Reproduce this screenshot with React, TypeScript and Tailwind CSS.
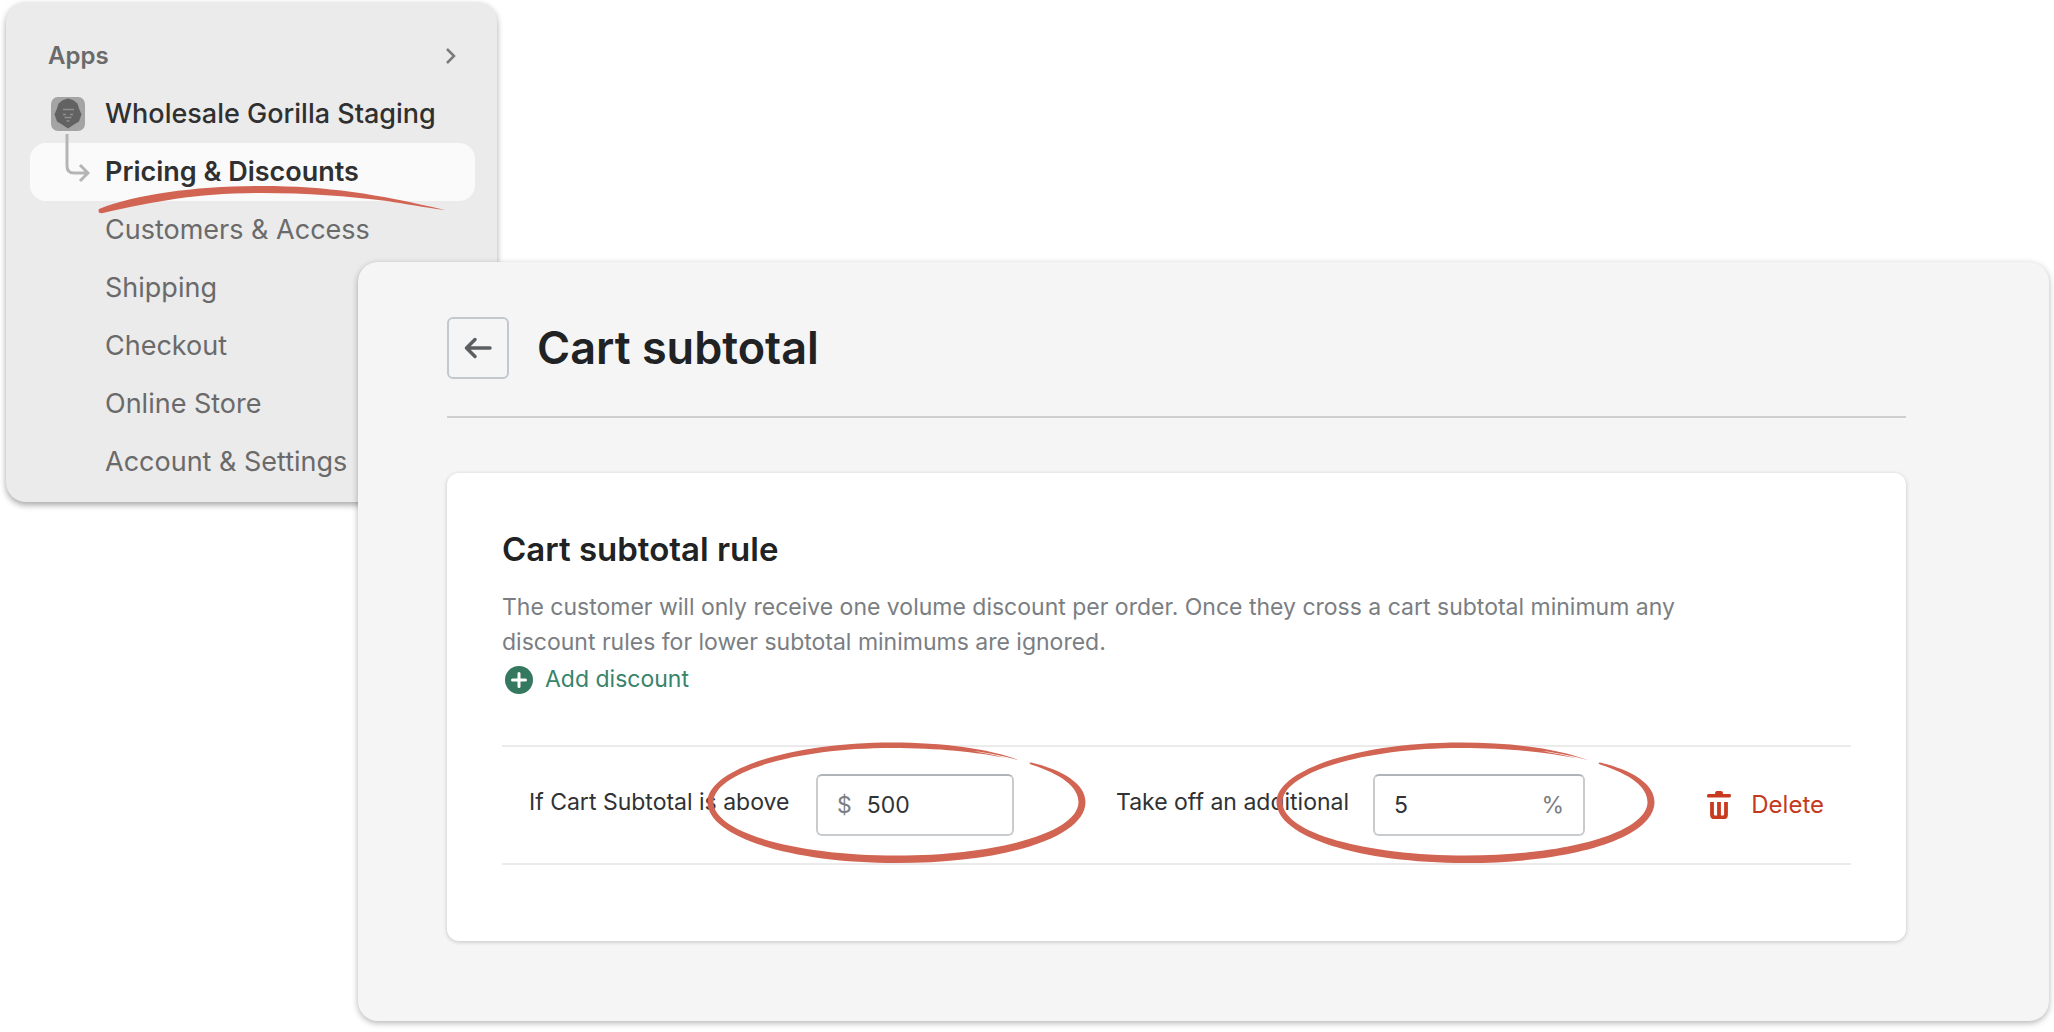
const MENU = ["Customers & Access", "Shipping", "Checkout", "Online Store", "Account & Settings"];

function Ring() {
  return (
    <svg viewBox="0 0 380 122" className="pointer-events-none h-[122px] w-[380px] max-w-none" fill="#d16452" aria-hidden="true">
      <path d="M313 18.500C283 7 238 .5 185 .5C82 .5 .5 28 .5 60C.5 95 84 121 190 121C296 121 378.500 96 378.500 60C378.500 42 356 28 324 20.500Q321 20.500 324 22.500C354 32 371.500 45 371.500 60C371.500 90 292 113.500 190 113.500C90 113.500 6.500 91 6.500 60C6.500 31 86 6 185 6C232 6 268 10 302 16.500C284 12 270 9.500 258 8C278 10 296 13.500 313 18.500Z" />
    </svg>
  );
}

export default function App() {
  return (
    <div className="min-h-screen bg-white font-['Inter',sans-serif]">
      <div className="flow-root pt-[2px]">
        <nav aria-label="Apps" className="ml-[6px] w-[491px] rounded-[20px] bg-[#ebebeb] pr-[22px] pl-6 pt-[25px] pb-[11px] text-[27px] leading-[58px] text-[#6a6a6a] shadow-[0_3px_6px_rgba(0,0,0,0.35)]">
          <button type="button" className="flex w-full items-center justify-between pr-[18px] pl-[18px] text-[24px] font-semibold text-[#6a6a6a]">
            Apps
            <svg viewBox="0 0 12 18" className="h-[18px] w-3" fill="none" stroke="#7a7a7a" strokeWidth="2.500" aria-hidden="true">
              <path d="M2 2l7 7-7 7" />
            </svg>
          </button>
          <div className="relative">
            <a href="#app" className="flex items-center gap-5 pl-[21px] font-medium text-[#303030]">
              <svg viewBox="0 0 34 34" className="size-[34px]" aria-hidden="true">
                <rect width="34" height="34" rx="7" fill="#a4a4a4" />
                <path d="M17 1.500l5 1.500 4.500 3.500 1.500 5 2.500 6-2.500 7-5 3-6 4-6-4-5-3-2.500-7 2.500-6 1.500-5 4.500-3.500z" fill="#626262" />
                <path d="M12 12.500h11M12 17.500h3M19 17.500h3M13.500 20.500h7M15.500 24h3" stroke="#909090" strokeWidth="1.500" />
              </svg>
              Wholesale Gorilla Staging
            </a>
            <a href="#pricing" aria-current="page" className="block rounded-2xl bg-[#fafafa] pl-[75px] font-semibold text-[#303030]">
              Pricing &amp; Discounts
            </a>
            <svg viewBox="0 0 26 50" className="pointer-events-none absolute top-[48px] left-[34px] h-[50px] w-[26px]" fill="none" stroke="#b5b5b5" strokeWidth="3" aria-hidden="true">
              <path d="M3 1v32q0 7 7 7h13M16 32l8 8-8 8" />
            </svg>
            <svg viewBox="0 0 348 28" className="pointer-events-none absolute top-[101px] left-[67px] h-7 w-[348px]" fill="#d16452" aria-hidden="true">
              <path d="M2 23C40 8 100 0 165 0C230 0 280 8 348 24C325 21 310 18 290 15C250 10 210 7 165 7C100 7 60 15 6 27Q0 28 2 23Z" />
            </svg>
          </div>
          <ul>
            {MENU.map((item) => (
              <li key={item}>
                <a href="#menu" className="block pl-[75px]">{item}</a>
              </li>
            ))}
          </ul>
        </nav>

        <main className="relative mr-[5px] -mt-[240px] ml-[358px] rounded-[20px] bg-[#f5f5f5] px-[89px] pt-[55px] pb-20 shadow-[0_2px_6px_rgba(0,0,0,0.3)] lg:pr-[143px]">
          <header className="flex items-center gap-7 border-b-2 border-[#cdcfd1] pb-[37px]">
            <button type="button" aria-label="Back" className="grid size-[62px] place-items-center rounded-md border-2 border-[#c3c8cd]">
              <svg viewBox="0 0 28 22" className="h-[22px] w-7" fill="none" stroke="#5c5f62" strokeWidth="3.500" strokeLinecap="round" strokeLinejoin="round" aria-hidden="true">
                <path d="M26 11H3M11 2.500L2.500 11L11 19.500" />
              </svg>
            </button>
            <h1 className="text-[45px] leading-[62px] font-semibold text-[#202223]">Cart subtotal</h1>
          </header>

          <section className="mt-[55px] rounded-xl bg-white px-[55px] pt-[53px] pb-[76px] shadow-[0_1px_4px_rgba(0,0,0,0.2)]">
            <h2 className="text-[33px] leading-[46px] font-semibold text-[#202223]">Cart subtotal rule</h2>
            <p className="mt-[18px] max-w-[1220px] text-[23px] leading-[35px] text-[#7a7e82]">
              The customer will only receive one volume discount per order. Once they cross a cart subtotal minimum any discount rules for lower subtotal minimums are ignored.
            </p>
            <button type="button" className="mt-[2px] ml-[3px] flex items-center gap-3 text-[23px] leading-[35px] text-[#38836a]">
              <svg viewBox="0 0 28 28" className="size-7" aria-hidden="true">
                <circle cx="14" cy="14" r="14" fill="#34785f" />
                <path d="M14 7.500v13M7.500 14h13" stroke="#fff" strokeWidth="3" strokeLinecap="round" />
              </svg>
              Add discount
            </button>
            <div className="mt-[48px] flex items-center border-y-2 border-[#ebebeb] px-[27px] py-[27px] text-[23px] text-[#303234]">
              <label htmlFor="minimum" className="w-[287px] pb-[6px]">If Cart Subtotal is above</label>
              <div className="relative flex h-[62px] w-[198px] items-center rounded-md border-2 border-[#c9cccf] border-t-[#b0b4b8] px-[19px]">
                <span className="text-[#7a7e82]">$</span>
                <input id="minimum" defaultValue="500" className="ml-[15px] w-full min-w-0 bg-transparent outline-none" />
                <div className="pointer-events-none absolute -top-[34px] -left-[111px]"><Ring /></div>
              </div>
              <label htmlFor="percent" className="ml-[102px] w-[257px] pb-[6px]">Take off an additional</label>
              <div className="relative flex h-[62px] w-[212px] items-center rounded-md border-2 border-[#c9cccf] border-t-[#b0b4b8] px-[19px]">
                <input id="percent" defaultValue="5" className="w-full min-w-0 bg-transparent outline-none" />
                <span className="text-[#7a7e82]">%</span>
                <div className="pointer-events-none absolute -top-[34px] -left-[99px]"><Ring /></div>
              </div>
              <button type="button" className="ml-auto flex items-center gap-5 text-[24px] text-[#c43a20]">
                <svg viewBox="0 0 24 28" className="h-7 w-6" fill="#c93a1e" aria-hidden="true">
                  <path d="M8 3Q8 0 10 0h4q2 0 2 3h7q1 0 1 1.500T23 6.500H1Q0 6.500 0 5T1 3z" />
                  <path d="M5 11v12.500q0 3 3 3h8q3 0 3-3V11M12 11v15" fill="none" stroke="#c93a1e" strokeWidth="3.800" />
                </svg>
                Delete
              </button>
            </div>
          </section>
        </main>
      </div>
    </div>
  );
}
